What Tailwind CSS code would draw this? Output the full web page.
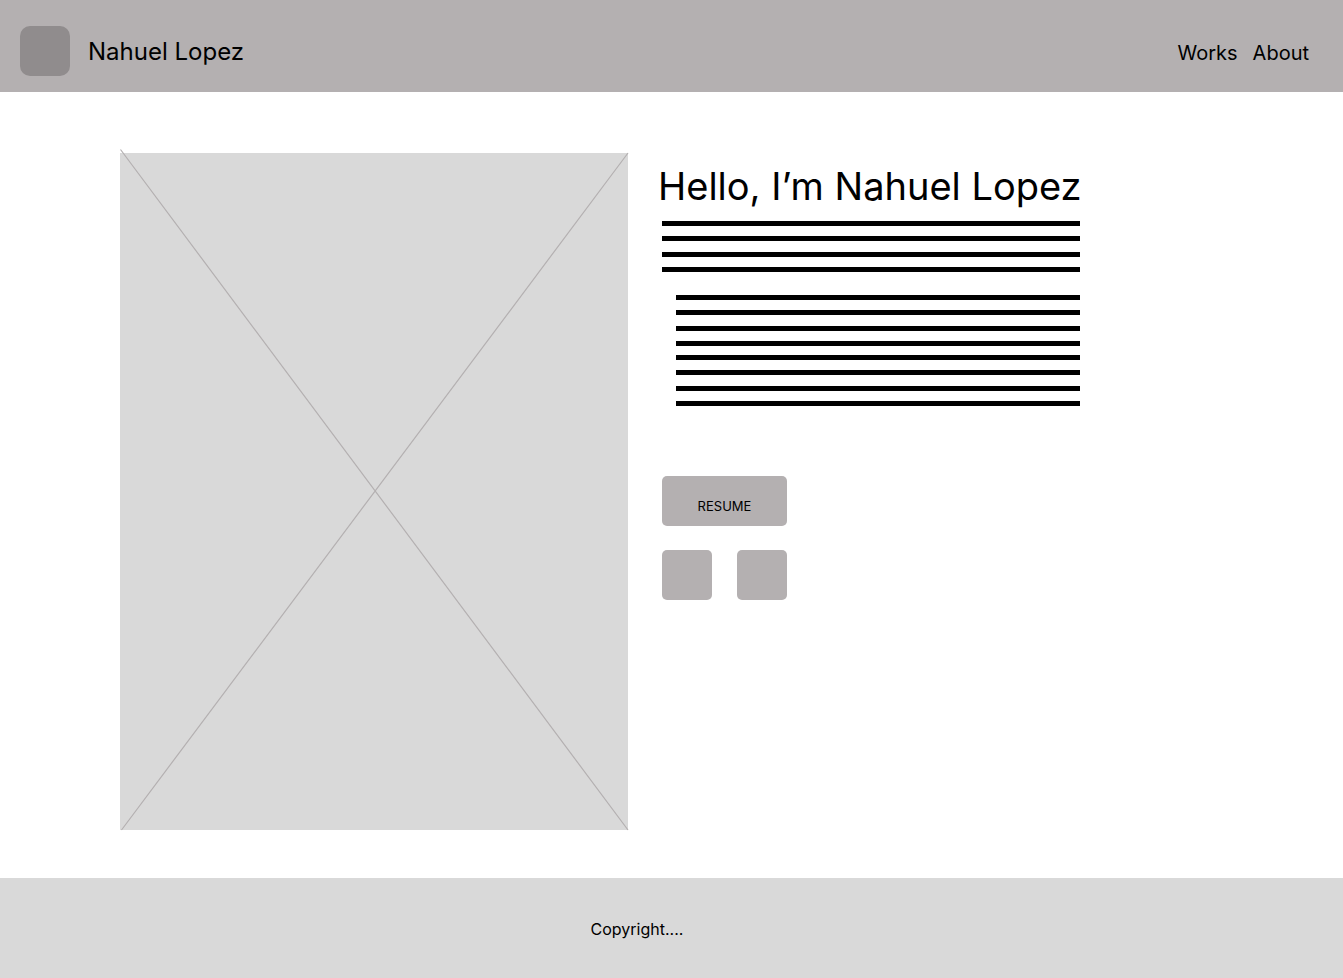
<!DOCTYPE html>
<html lang="en">
<head>
<meta charset="utf-8">
<meta name="viewport" content="width=device-width, initial-scale=1">
<title>Nahuel Lopez</title>
<script src="https://cdn.jsdelivr.net/npm/@tailwindcss/browser@4"></script>
</head>
<body class="flex min-h-screen flex-col bg-white font-['Inter',sans-serif] text-black">
<header class="flex items-center justify-between bg-[#b4b0b1] pt-[26px] pr-[34px] pb-4 pl-5">
  <a href="#" class="flex items-center gap-[18px] text-2xl">
    <span class="size-[50px] rounded-[10px] bg-[#908c8d]"></span>
    <span class="pt-0.5">Nahuel Lopez</span>
  </a>
  <nav class="flex gap-[15px] pt-1 text-xl">
    <a href="#works">Works</a>
    <a href="#about">About</a>
  </nav>
</header>
<main class="flex flex-1 items-start gap-[30px] px-[120px] pt-[61px] pb-12">
  <div class="h-[677px] w-[508px] shrink-0 bg-[#d9d9d9]">
    <svg class="block size-full overflow-visible" viewBox="0 0 508 677" fill="none" stroke="#b4b0b1" stroke-width="1.2" role="img" aria-label="Portrait placeholder">
      <path d="M.5-3.5 508 677M508 0 1.5 677"/>
    </svg>
  </div>
  <section class="pt-2">
    <h1 class="text-[38px] leading-[50px]">Hello, I’m Nahuel Lopez</h1>
    <svg class="mt-2.5 ml-1 block" width="418" height="185" viewBox="0 0 418 185" aria-hidden="true">
      <path d="M0 0h418v5H0zM0 15h418v5H0zM0 31h418v5H0zM0 46h418v5H0zM14 74h404v5H14zM14 89h404v5H14zM14 105h404v5H14zM14 120h404v5H14zM14 134h404v5H14zM14 149h404v5H14zM14 165h404v5H14zM14 180h404v5H14z"/>
    </svg>
    <div class="mt-[70px] ml-1 flex w-[125px] flex-wrap justify-between gap-y-6">
      <button type="button" class="h-[50px] w-full rounded-[5px] bg-[#b4b0b1] pt-3 text-[13px]">RESUME</button>
      <a href="#" aria-label="Profile one" class="size-[50px] rounded-[5px] bg-[#b4b0b1]"></a>
      <a href="#" aria-label="Profile two" class="size-[50px] rounded-[5px] bg-[#b4b0b1]"></a>
    </div>
  </section>
</main>
<footer class="flex h-[100px] items-center justify-center bg-[#d9d9d9] pt-0.5 pr-[69px]">
  <p>Copyright....</p>
</footer>
</body>
</html>
